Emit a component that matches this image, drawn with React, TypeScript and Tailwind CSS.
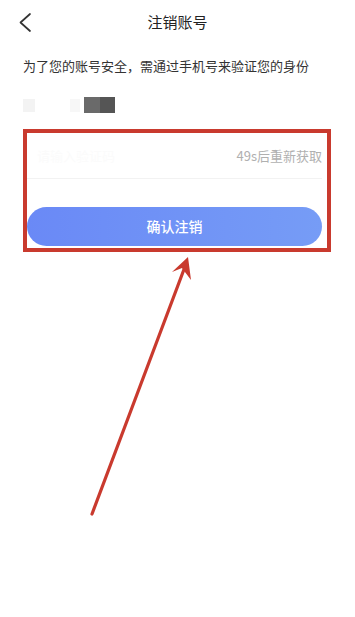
const font = {
  fontFamily: '"Noto Sans CJK SC", "Noto Sans", sans-serif',
};

function Header() {
  return (
    <div className="relative flex h-[44px] items-center justify-center">
      <button className="absolute left-[18px] top-[12px] text-[#333]">
        <svg width="14" height="21" viewBox="0 0 14 21" fill="none">
          <path
            d="M12 2 L2.5 10.5 L12 19"
            stroke="currentColor"
            strokeWidth="1.7"
            strokeLinecap="round"
            strokeLinejoin="round"
          />
        </svg>
      </button>
      <span className="text-[15px] text-[#222]">注销账号</span>
    </div>
  );
}

function Masked() {
  // the phone number is blurred out in the picture
  return (
    <div className="mt-[22px] flex h-[16px] items-center px-[23px]">
      <div className="h-[13px] w-[12px] bg-[#f3f3f3]" />
      <div className="ml-[35px] h-[13px] w-[10px] bg-[#f7f7f7]" />
      <div className="ml-[4px] h-[16px] w-[16px] bg-[#6a6a6a]" />
      <div className="h-[16px] w-[15px] bg-[#555]" />
    </div>
  );
}

function Arrow() {
  return (
    <svg
      className="pointer-events-none absolute left-0 top-0"
      width="355"
      height="617"
      viewBox="0 0 355 617"
    >
      <line
        x1="92"
        y1="514"
        x2="186"
        y2="264"
        stroke="#c93a2e"
        strokeWidth="3.2"
        strokeLinecap="round"
      />
      <path d="M188 257 L172 272 L182 268 L191 280 Z" fill="#c93a2e" />
    </svg>
  );
}

export default function App() {
  return (
    <div style={font} className="relative h-[617px] w-[355px] overflow-hidden bg-white">
      <Header />
      <p className="mt-[13px] px-[23px] text-[13px] leading-[18px] text-[#333]">
        为了您的账号安全，需通过手机号来验证您的身份
      </p>
      <Masked />
      <div className="mx-[23px] mt-[16px] w-[308px] border-4 border-[#c93a2e]">
        <div className="mr-[5px]">
          <div className="flex h-[45px] items-center justify-between">
            <span className="pl-[10px] text-[13px] text-[#fbfbfb]">请输入验证码</span>
            <span className="text-[13px] text-[#b0b0b0]">49s后重新获取</span>
          </div>
          <div className="h-px bg-[#f2f2f2]" />
          <button className="mt-[28px] mb-[2px] flex h-[39px] w-full items-center justify-center rounded-full bg-gradient-to-r from-[#6a89f6] to-[#769cf6] text-[14px] font-medium text-white">
            确认注销
          </button>
        </div>
      </div>
      <Arrow />
    </div>
  );
}
